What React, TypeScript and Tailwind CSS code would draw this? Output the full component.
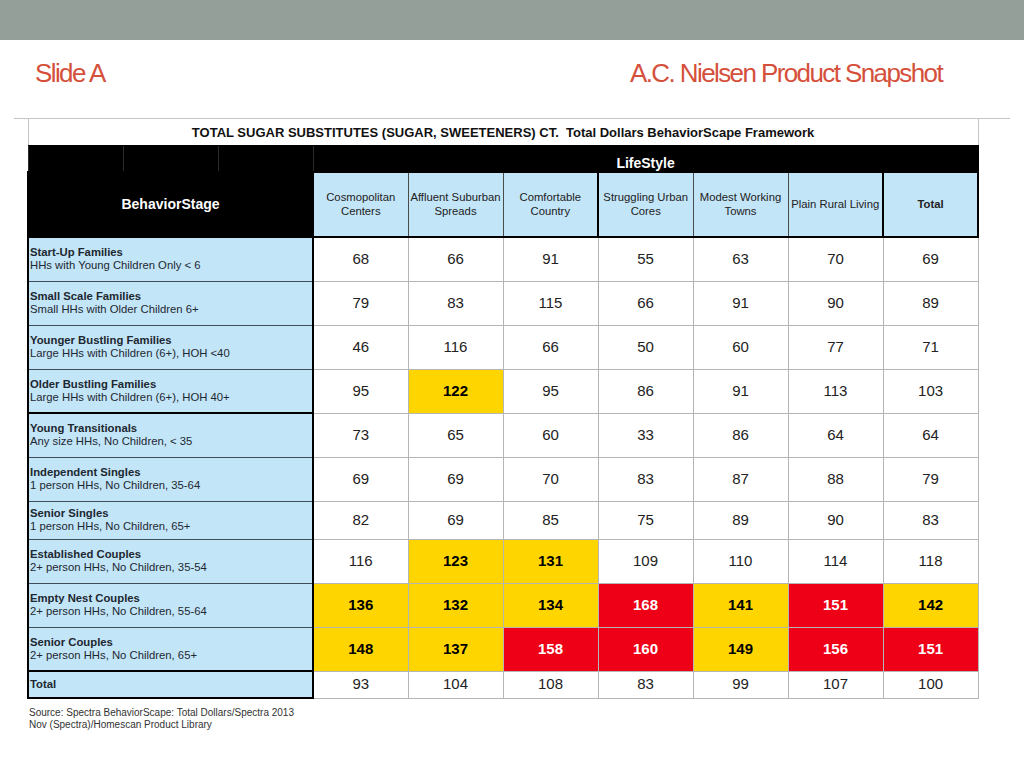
import React from "react";

type Row = {
  name: string;
  desc: string;
  vals: number[];
  hl: string;
  h: string;
  thick?: boolean;
};

const rows: Row[] = [
  { name: "Start-Up Families", desc: "HHs with Young Children Only < 6", vals: [68, 66, 91, 55, 63, 70, 69], hl: "-------", h: "h-[44px]" },
  { name: "Small Scale Families", desc: "Small HHs with Older Children 6+", vals: [79, 83, 115, 66, 91, 90, 89], hl: "-------", h: "h-[44px]" },
  { name: "Younger Bustling Families", desc: "Large HHs with Children (6+), HOH <40", vals: [46, 116, 66, 50, 60, 77, 71], hl: "-------", h: "h-[44px]" },
  { name: "Older Bustling Families", desc: "Large HHs with Children (6+), HOH 40+", vals: [95, 122, 95, 86, 91, 113, 103], hl: "-y-----", h: "h-[44px]", thick: true },
  { name: "Young Transitionals", desc: "Any size HHs, No Children, < 35", vals: [73, 65, 60, 33, 86, 64, 64], hl: "-------", h: "h-[44px]" },
  { name: "Independent Singles", desc: "1 person HHs, No Children, 35-64", vals: [69, 69, 70, 83, 87, 88, 79], hl: "-------", h: "h-[44px]" },
  { name: "Senior Singles", desc: "1 person HHs, No Children, 65+", vals: [82, 69, 85, 75, 89, 90, 83], hl: "-------", h: "h-[38px]" },
  { name: "Established Couples", desc: "2+ person HHs, No Children, 35-54", vals: [116, 123, 131, 109, 110, 114, 118], hl: "-yy----", h: "h-[44px]" },
  { name: "Empty Nest Couples", desc: "2+ person HHs, No Children, 55-64", vals: [136, 132, 134, 168, 141, 151, 142], hl: "yyyryry", h: "h-[44px]" },
  { name: "Senior Couples", desc: "2+ person HHs, No Children, 65+", vals: [148, 137, 158, 160, 149, 156, 151], hl: "yyrryrr", h: "h-[44px]", thick: true },
];

const totals = [93, 104, 108, 83, 99, 107, 100];

const heads: { top: string; bottom?: string; thickLeft?: boolean; bold?: boolean }[] = [
  { top: "Cosmopolitan", bottom: "Centers", thickLeft: true },
  { top: "Affluent Suburban", bottom: "Spreads" },
  { top: "Comfortable", bottom: "Country" },
  { top: "Struggling Urban", bottom: "Cores", thickLeft: true },
  { top: "Modest Working", bottom: "Towns" },
  { top: "Plain Rural Living" },
  { top: "Total", thickLeft: true, bold: true },
];

function valueClass(flag: string) {
  if (flag === "y") return "bg-[#ffd500] font-bold text-black";
  if (flag === "r") return "bg-[#ee0016] font-bold text-white";
  return "bg-white text-[#222]";
}

export default function App() {
  return (
    <div className="w-[1024px] h-[768px] bg-white font-['Liberation_Sans',Arial,sans-serif] overflow-hidden">
      {/* top band */}
      <div className="h-[40px] bg-[#949f99]" />

      {/* slide titles */}
      <div className="flex justify-between h-[78px] pt-[18px] pl-[35px] pr-[82px] text-[26px] leading-[30px] tracking-[-1.6px] text-[#d5503b]">
        <span>Slide A</span>
        <span>A.C. Nielsen Product Snapshot</span>
      </div>
      <div className="mx-[14px] h-px bg-[#c4c4c4]" />

      <div className="pl-[27px]">
        <table className="border-collapse table-fixed w-[950px]">
          <colgroup>
            {Array.from({ length: 10 }).map((_, i) => (
              <col key={i} className="w-[95px]" />
            ))}
          </colgroup>
          <tbody>
            <tr>
              <td colSpan={10} className="h-[26px] pt-[2px] border border-t-0 border-[#c4c4c4] border-b-black text-center text-[13px] font-bold text-[#111] whitespace-pre">
                {"TOTAL SUGAR SUBSTITUTES (SUGAR, SWEETENERS) CT.  Total Dollars BehaviorScape Framework"}
              </td>
            </tr>
            <tr>
              <td className="h-[27px] bg-black border border-[#2b2b2b]" />
              <td className="h-[27px] bg-black border border-[#2b2b2b]" />
              <td className="h-[27px] bg-black border border-[#2b2b2b]" />
              <td colSpan={7} className="h-[27px] bg-black border border-black text-center align-bottom pb-[1px] text-[14px] leading-[16px] font-bold text-white">
                LifeStyle
              </td>
            </tr>
            <tr>
              <td colSpan={3} className="h-[65px] bg-black border-2 border-black text-center text-[14px] font-bold text-white">
                BehaviorStage
              </td>
              {heads.map((h) => (
                <td
                  key={h.top}
                  className={
                    "h-[65px] bg-[#c3e5f8] border border-[#4a4a4a] border-t-black border-b-2 border-b-black text-center text-[11.3px] leading-[14px] text-[#222] whitespace-nowrap px-0 " +
                    (h.thickLeft ? "border-l-2 border-l-black " : "") +
                    (h.bold ? "font-bold border-r-2 border-r-black" : "")
                  }
                >
                  {h.top}
                  {h.bottom && (
                    <>
                      <br />
                      {h.bottom}
                    </>
                  )}
                </td>
              ))}
            </tr>

            {rows.map((r) => (
              <tr key={r.name}>
                <td
                  colSpan={3}
                  className={
                    r.h +
                    " bg-[#c3e5f8] border-l-2 border-r-2 border-l-black border-r-black pl-px text-[11.3px] leading-[13px] text-[#1d2830] align-middle " +
                    (r.thick ? "border-b-2 border-b-black" : "border-b border-b-[#3e4d57]")
                  }
                >
                  <div className="font-bold">{r.name}</div>
                  <div>{r.desc}</div>
                </td>
                {r.vals.map((v, i) => (
                  <td
                    key={i}
                    className={
                      r.h +
                      " border border-[#b5b5b5] text-center text-[15px] " +
                      valueClass(r.hl[i])
                    }
                  >
                    {v}
                  </td>
                ))}
              </tr>
            ))}

            <tr>
              <td colSpan={3} className="h-[27px] bg-[#c3e5f8] border-2 border-black pl-px text-[11.3px] font-bold text-[#1d2830]">
                Total
              </td>
              {totals.map((v, i) => (
                <td key={i} className="h-[27px] border border-[#b5b5b5] text-center text-[15px] text-[#222]">
                  {v}
                </td>
              ))}
            </tr>
          </tbody>
        </table>
      </div>

      {/* footnote */}
      <div className="pl-[29px] pt-[8px] text-[10px] leading-[12px] text-[#333]">
        <div>Source: Spectra BehaviorScape: Total Dollars/Spectra 2013</div>
        <div>Nov (Spectra)/Homescan Product Library</div>
      </div>
    </div>
  );
}
